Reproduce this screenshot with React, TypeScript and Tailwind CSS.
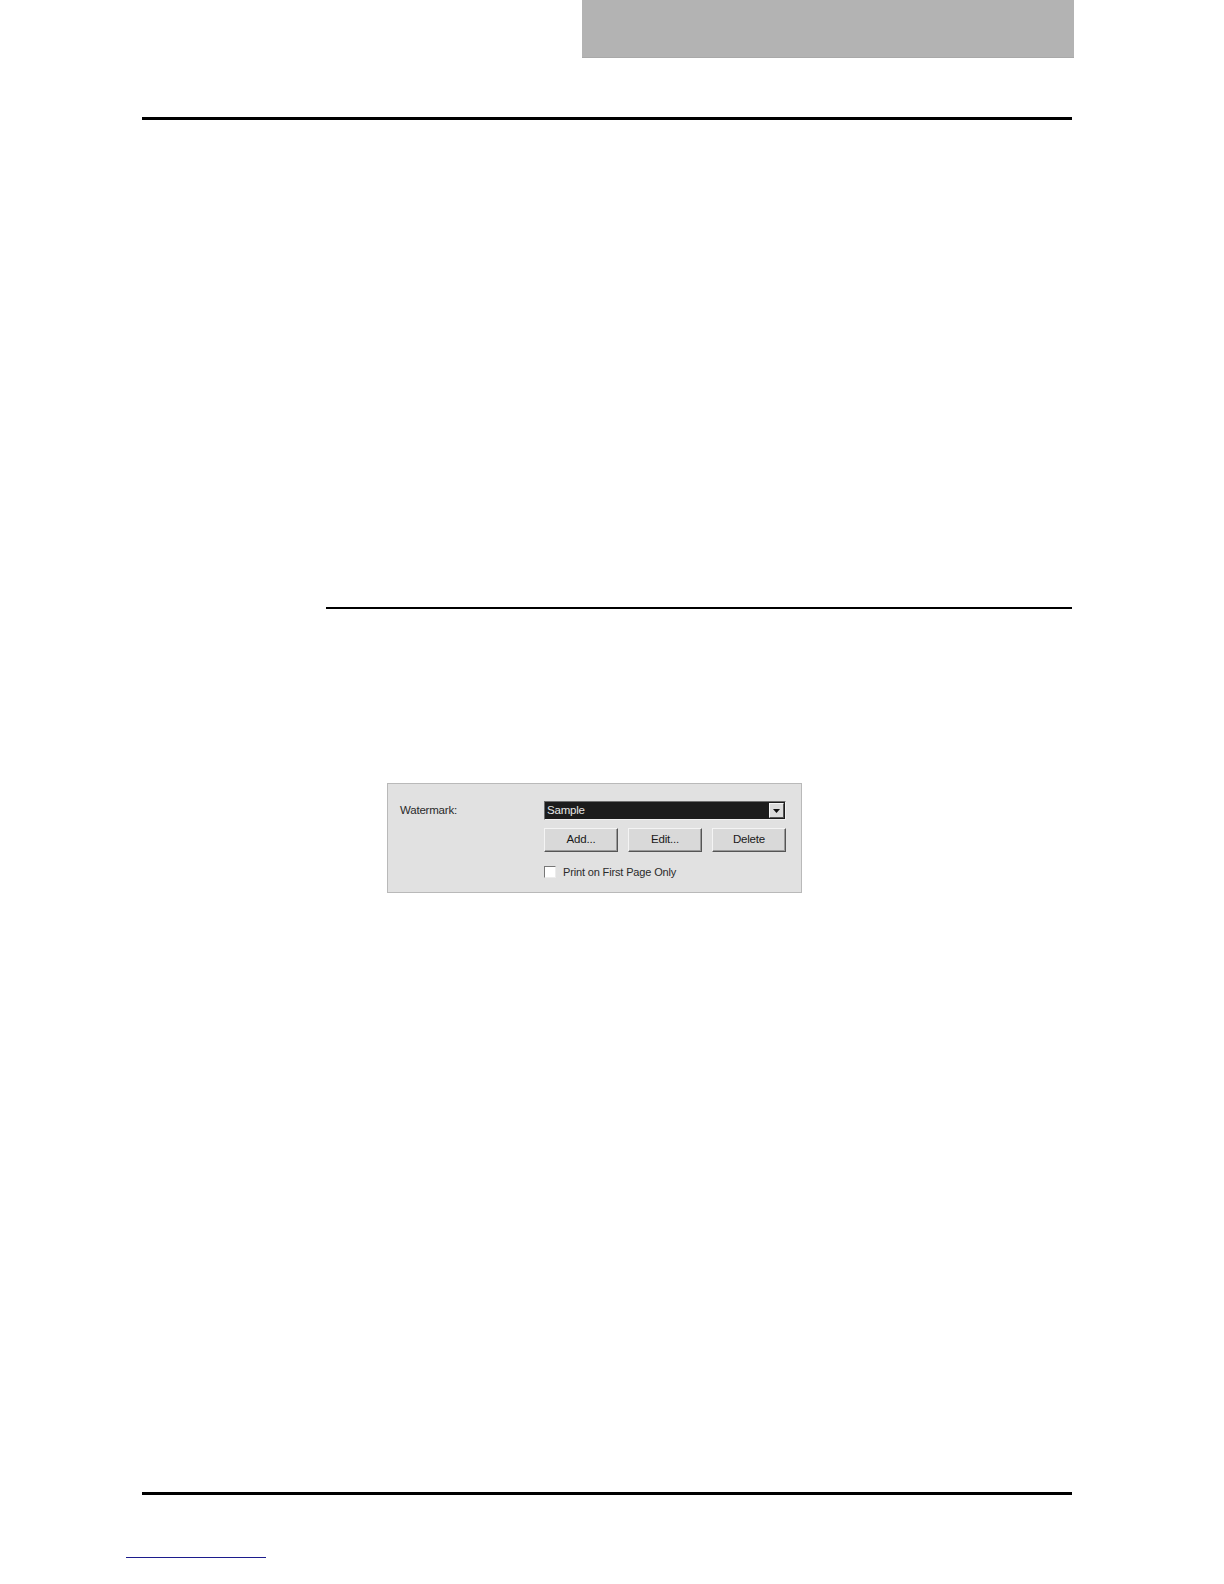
export default function App() {
  const btn =
    "w-[74px] h-[24px] bg-[#d9d9d9] text-[11.5px] tracking-[-0.2px] text-[#1a1a1a] flex items-center justify-center border border-t-[#f4f4f4] border-l-[#f4f4f4] border-r-[#555] border-b-[#555] shadow-[inset_-1px_-1px_0_#9a9a9a]";

  return (
    <div className="relative w-[1224px] h-[1584px] bg-white font-['Liberation_Sans',Arial,sans-serif]">
      {/* header tab */}
      <div className="flex">
        <div className="w-[582px]" />
        <div className="w-[492px] h-[58px] bg-[#b3b3b3] border-b border-[#a9a9a9]" />
      </div>

      <div className="ml-[142px] w-[930px] mt-[59px] h-[3px] bg-black" />

      <div className="ml-[326px] w-[746px] mt-[487px] h-[2px] bg-black" />

      {/* dialog snippet */}
      <div className="ml-[387px] mt-[174px] w-[415px] h-[110px] bg-[#e1e1e1] border border-[#b9b9b9] relative">
        <div className="flex pt-[17px] pl-[12px]">
          <div className="w-[144px] text-[11.5px] tracking-[-0.2px] text-[#2a2a2a] leading-[16px] pt-[1px]">
            Watermark:
          </div>
          <div className="flex flex-col">
            <div className="w-[242px] h-[19px] bg-[#1c1c1c] border border-t-[#6e6e6e] border-l-[#6e6e6e] border-r-[#f0f0f0] border-b-[#f0f0f0] flex items-center">
              <span className="pl-[2px] text-[11.5px] tracking-[-0.2px] text-[#e6e6e6] leading-none flex-1">
                Sample
              </span>
              <div className="w-[15px] h-[15px] mr-[1px] bg-[#dcdcdc] border border-t-[#f5f5f5] border-l-[#f5f5f5] border-r-[#555] border-b-[#555] flex items-center justify-center">
                <svg width="7" height="4" viewBox="0 0 7 4">
                  <path d="M0 0h7L3.5 4z" fill="#111" />
                </svg>
              </div>
            </div>
            <div className="flex gap-[10px] mt-[8px]">
              <div className={btn}>Add...</div>
              <div className={btn}>Edit...</div>
              <div className={btn}>Delete</div>
            </div>
            <div className="flex items-center mt-[14px]">
              <div className="w-[12px] h-[12px] bg-white border border-t-[#777] border-l-[#777] border-r-[#ececec] border-b-[#ececec]" />
              <span className="ml-[7px] text-[11px] tracking-[-0.15px] text-[#2a2a2a] leading-none">
                Print on First Page Only
              </span>
            </div>
          </div>
        </div>
      </div>

      <div className="ml-[142px] w-[930px] mt-[599px] h-[3px] bg-black" />

      <div className="ml-[126px] w-[140px] mt-[62px] h-[1px] bg-[#1c1c8c]" />
    </div>
  );
}
